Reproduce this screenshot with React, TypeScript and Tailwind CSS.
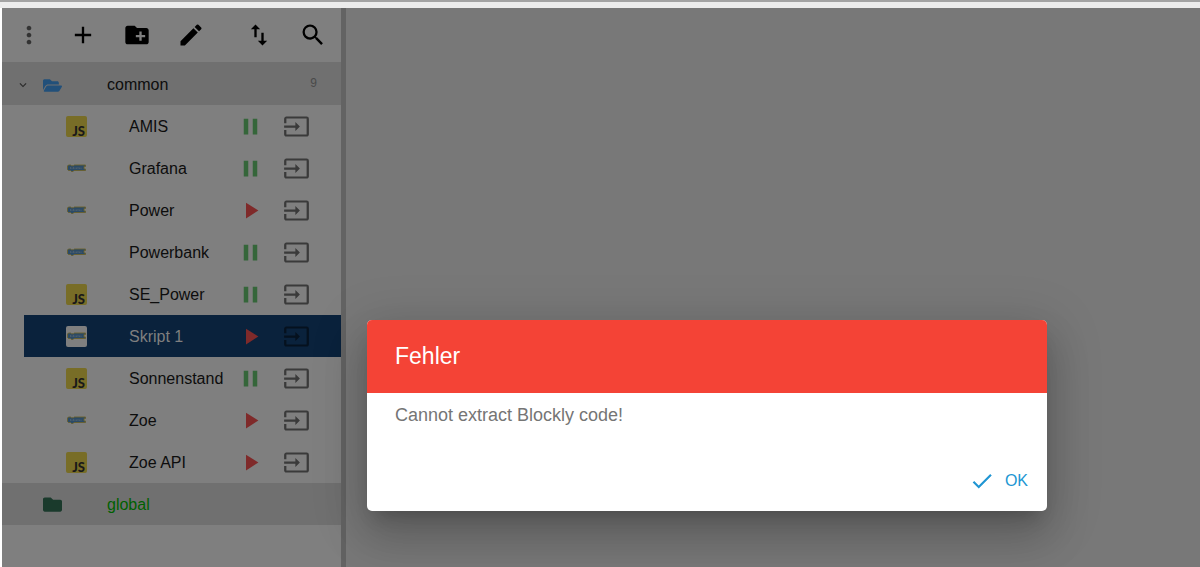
import type { ReactNode } from "react";
import {
  MdAdd,
  MdCheck,
  MdCreateNewFolder,
  MdEdit,
  MdExpandMore,
  MdImportExport,
  MdMoreVert,
  MdOutlineInput,
  MdPause,
  MdPlayArrow,
  MdSearch,
} from "react-icons/md";
import { FaFolder, FaFolderOpen } from "react-icons/fa";

type Script = {
  name: string;
  type: "js" | "blockly";
  running: boolean;
  selected?: boolean;
};

const scripts: Script[] = [
  { name: "AMIS", type: "js", running: true },
  { name: "Grafana", type: "blockly", running: true },
  { name: "Power", type: "blockly", running: false },
  { name: "Powerbank", type: "blockly", running: true },
  { name: "SE_Power", type: "js", running: true },
  { name: "Skript 1", type: "blockly", running: false, selected: true },
  { name: "Sonnenstand", type: "js", running: true },
  { name: "Zoe", type: "blockly", running: false },
  { name: "Zoe API", type: "js", running: false },
];

function ToolButton({ label, className, children }: { label: string; className?: string; children: ReactNode }) {
  return (
    <button type="button" aria-label={label} className={`flex size-7 items-center justify-center text-black ${className ?? ""}`}>
      {children}
    </button>
  );
}

function JsIcon() {
  return (
    <span className="flex size-[21px] items-end justify-end rounded-xs bg-[#786d27] pr-0.5 font-['Lato',sans-serif] text-[13px] leading-[12px] font-black text-[#191919]">
      JS
    </span>
  );
}

function BlocklyIcon({ selected }: { selected?: boolean }) {
  return (
    <span className={`flex size-[21px] items-center justify-center rounded-xs ${selected ? "bg-[#7f7f7f]" : ""}`}>
      <svg viewBox="0 0 38 16" className="h-2 w-[19px]" aria-hidden="true">
        <path
          d="M3 2h4l2 1.500h4L15 2h22v3h-3v5h3v3H14l-2 2H9l-2-2H3l-2-2V4z"
          fill="#2b4a66"
          stroke="#6a602b"
          strokeWidth="1.800"
        />
        <path d="M7 6v4M10 7v3M13 6v4M16 7v3M19 7v3M22 6v4M25 7v3M28 7v3" fill="none" stroke="#56646f" strokeWidth="1.400" />
      </svg>
    </span>
  );
}

function ScriptRow({ script }: { script: Script }) {
  return (
    <li
      className={`ml-[22px] flex h-[42px] items-center pr-[31px] pl-[42px] ${
        script.selected ? "bg-[#0a223c] text-[#7f7f7f]" : "text-[#0d0d0d]"
      }`}
    >
      {script.type === "js" ? <JsIcon /> : <BlocklyIcon selected={script.selected} />}
      <span className="ml-[42px] flex-1 pt-0.5 text-base whitespace-nowrap">{script.name}</span>
      <button
        type="button"
        aria-label={script.running ? `Pause ${script.name}` : `Start ${script.name}`}
        className={script.running ? "text-[#35663a]" : "text-[#7f2a2a]"}
      >
        {script.running ? <MdPause size={27} /> : <MdPlayArrow size={27} />}
      </button>
      <button
        type="button"
        aria-label={`Open ${script.name}`}
        className={`ml-[19px] ${script.selected ? "text-[#05111e]" : "text-[#3a3a3a]"}`}
      >
        <MdOutlineInput size={27} />
      </button>
    </li>
  );
}

export default function App() {
  return (
    <div className="relative flex min-h-screen flex-col border-l-2 border-white bg-[#787878] font-['Liberation_Sans',Arial,sans-serif]">
      <div className="-ml-0.5 h-2 border-t-2 border-[#a3a3a3] bg-[#ececec]" />
      <div className="flex flex-1">
        <aside className="flex w-[344px] shrink-0 flex-col border-r-[5px] border-[#636363] bg-[#7f7f7f]">
          <div className="flex h-[54px] items-center pl-[13px]" role="toolbar" aria-label="Scripts">
            <ToolButton label="Menu">
              <MdMoreVert size={28} color="#333333" />
            </ToolButton>
            <ToolButton label="New script" className="ml-[26px]">
              <MdAdd size={28} />
            </ToolButton>
            <ToolButton label="New folder" className="ml-[26px]">
              <MdCreateNewFolder size={28} />
            </ToolButton>
            <ToolButton label="Edit" className="ml-[26px]">
              <MdEdit size={28} />
            </ToolButton>
            <ToolButton label="Reorder" className="ml-10">
              <MdImportExport size={28} />
            </ToolButton>
            <ToolButton label="Search" className="ml-[26px]">
              <MdSearch size={28} />
            </ToolButton>
          </div>
          <section>
            <h2 className="flex h-[43px] items-center bg-[#707070] pt-[3px] pr-6 pl-[14px] text-base text-[#0d0d0d]">
              <MdExpandMore size={14} color="#2a2a2a" />
              <FaFolderOpen size={19} color="#22507a" className="ml-[13px]" />
              <span className="ml-[45px] flex-1">common</span>
              <span className="pb-1 text-xs text-[#4a4a4a]">9</span>
            </h2>
            <ul>
              {scripts.map((script) => (
                <ScriptRow key={script.name} script={script} />
              ))}
            </ul>
          </section>
          <h2 className="flex h-[42px] items-center bg-[#707070] pl-[41px] text-base text-[#006000]">
            <FaFolder size={19} color="#1a3a2c" />
            <span className="ml-[45px] pt-0.5">global</span>
          </h2>
        </aside>
        <main className="flex-1" />
      </div>

      <div
        role="alertdialog"
        aria-labelledby="dialog-title"
        aria-describedby="dialog-text"
        className="absolute top-[320px] right-[153px] left-[365px] overflow-hidden rounded-[5px] bg-white shadow-[0_12px_17px_-8px_rgba(0,0,0,0.2),0_27px_43px_3px_rgba(0,0,0,0.14),0_10px_52px_9px_rgba(0,0,0,0.12)]"
      >
        <h1 id="dialog-title" className="flex h-[73px] items-center bg-[#f44336] px-7 text-[23px] text-white">
          Fehler
        </h1>
        <p id="dialog-text" className="px-7 pt-2 text-lg leading-7 text-[#757575]">
          Cannot extract Blockly code!
        </p>
        <div className="flex justify-end pt-8 pr-[19px] pb-[10px]">
          <button type="button" className="flex h-10 items-center gap-[10px] text-base text-[#2196d3]">
            <MdCheck size={26} />
            OK
          </button>
        </div>
      </div>
    </div>
  );
}
